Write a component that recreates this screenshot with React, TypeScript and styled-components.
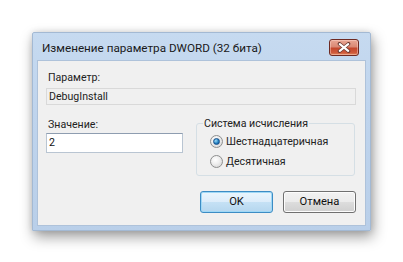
import React from "react";
import styled, { createGlobalStyle } from "styled-components";

const Global = createGlobalStyle`
  html, body { margin: 0; padding: 0; background: #ffffff; }
  body { font-family: Roboto, "Noto Sans", sans-serif; }
`;

const Page = styled.div`
  width: 403px;
  height: 262px;
  padding: 32px 0 0 32px;
  box-sizing: border-box;
`;

const Frame = styled.div`
  width: 339px;
  height: 199px;
  box-sizing: border-box;
  background: linear-gradient(#c6daf0, #bfd4ed 40%, #b9cfe9);
  border: 1px solid #a3b9d3;
  border-radius: 2px 2px 0 0;
  box-shadow: 2px 6px 14px rgba(0, 0, 0, 0.38), 0 0 6px rgba(0, 0, 0, 0.12);
  display: flex;
  flex-direction: column;
  padding: 0 4px 4px 4px;
`;

const TitleBar = styled.div`
  height: 27px;
  display: flex;
  align-items: flex-start;
  justify-content: space-between;
  padding: 0 7px 0 5px;
`;

const TitleText = styled.div`
  font-size: 11.7px;
  line-height: 15px;
  color: #1a1a1a;
  padding-top: 8px;
`;

const CloseButton = styled.div`
  margin-top: 6px;
  width: 30px;
  height: 17px;
  box-sizing: border-box;
  border: 1px solid #6e2a22;
  border-radius: 3px;
  background: linear-gradient(#e9a795 0%, #da8874 45%, #c4472d 55%, #cf5b3c 85%, #e08a60 100%);
  box-shadow: inset 0 0 0 1px rgba(255, 220, 210, 0.45);
  display: flex;
  align-items: center;
  justify-content: center;
`;

const Client = styled.div`
  flex: 1;
  background: #f0f0f0;
  border: 1px solid #aec2da;
  display: flex;
  flex-direction: column;
  padding: 9px 9px 0 8px;
`;

const Label = styled.div`
  font-size: 10.6px;
  line-height: 15px;
  color: #222;
  padding-left: 2px;
`;

const ReadOnlyField = styled.div`
  margin-top: 3px;
  height: 17px;
  box-sizing: border-box;
  border: 1px solid #d9d9d9;
  background: #f0f0f0;
  font-size: 10.6px;
  line-height: 15px;
  color: #222;
  padding-left: 2px;
`;

const Middle = styled.div`
  display: flex;
  margin-top: 12px;
  gap: 13px;
`;

const LeftCol = styled.div`
  display: flex;
  flex-direction: column;
  gap: 1px;
`;

const ValueInput = styled.div`
  width: 137px;
  height: 20px;
  box-sizing: border-box;
  border: 1px solid #b9c5d2;
  border-top-color: #8e9db0;
  background: #ffffff;
  font-size: 10.6px;
  line-height: 18px;
  color: #111;
  padding-left: 2px;
`;

const Group = styled.fieldset`
  margin: 0;
  width: 159px;
  height: 59px;
  box-sizing: border-box;
  border: 1px solid #d5dfe5;
  border-radius: 3px;
  padding: 0 0 0 13px;
  display: flex;
  flex-direction: column;
  gap: 5px;
`;

const Legend = styled.legend`
  font-size: 10.6px;
  line-height: 13px;
  color: #222;
  padding: 0 1px;
  margin-left: -7px;
`;

const RadioRow = styled.div`
  display: flex;
  align-items: center;
  gap: 3px;
  font-size: 10.6px;
  line-height: 15px;
  color: #222;
  &:first-of-type { margin-top: 4px; }
`;

const RadioCircle = styled.div<{ $checked?: boolean }>`
  width: 13px;
  height: 13px;
  box-sizing: border-box;
  border-radius: 50%;
  border: 1px solid #8e8f8f;
  background: radial-gradient(circle at 40% 35%, #ffffff 0%, #f0f0f0 40%, #cfcfcf 100%);
  display: flex;
  align-items: center;
  justify-content: center;
  &::after {
    content: "";
    display: ${(p) => (p.$checked ? "block" : "none")};
    width: 5px;
    height: 5px;
    border-radius: 50%;
    background: radial-gradient(circle at 35% 35%, #9cdcf9, #1d7bbd 60%, #0b4b8a);
    border: 1px solid #18508a;
  }
`;

const Buttons = styled.div`
  display: flex;
  justify-content: flex-end;
  gap: 10px;
  margin-top: 15px;
`;

const Button = styled.div<{ $default?: boolean }>`
  width: 73px;
  height: 22px;
  box-sizing: border-box;
  border-radius: 3px;
  border: 1px solid ${(p) => (p.$default ? "#3c8cc4" : "#707070")};
  background: ${(p) =>
    p.$default
      ? "linear-gradient(#eaf6fd 0%, #dcecfa 50%, #c5e1f5 51%, #b5d6ee 100%)"
      : "linear-gradient(#f2f2f2 0%, #ebebeb 50%, #dddddd 51%, #cfcfcf 100%)"};
  box-shadow: inset 0 0 0 1px ${(p) => (p.$default ? "#9fd8f6" : "#fcfcfc")};
  font-size: 11.2px;
  line-height: 20px;
  text-align: center;
  color: #111;
`;

export default function App() {
  return (
    <Page>
      <Global />
      <Frame>
        <TitleBar>
          <TitleText>Изменение параметра DWORD (32 бита)</TitleText>
          <CloseButton>
            <svg width="14" height="11" viewBox="0 0 14 11">
              <path
                d="M2.5 1.8 L11.5 9.2 M11.5 1.8 L2.5 9.2"
                stroke="#6a3a33"
                strokeWidth="3.6"
                strokeLinecap="round"
                fill="none"
              />
              <path
                d="M2.8 2.2 L11.2 8.8 M11.2 2.2 L2.8 8.8"
                stroke="#ffffff"
                strokeWidth="2.2"
                strokeLinecap="round"
                fill="none"
              />
            </svg>
          </CloseButton>
        </TitleBar>
        <Client>
          <Label>Параметр:</Label>
          <ReadOnlyField>DebugInstall</ReadOnlyField>
          <Middle>
            <LeftCol>
              <Label>Значение:</Label>
              <ValueInput>2</ValueInput>
            </LeftCol>
            <Group>
              <Legend>Система исчисления</Legend>
              <RadioRow>
                <RadioCircle $checked />
                Шестнадцатеричная
              </RadioRow>
              <RadioRow>
                <RadioCircle />
                Десятичная
              </RadioRow>
            </Group>
          </Middle>
          <Buttons>
            <Button $default>OK</Button>
            <Button>Отмена</Button>
          </Buttons>
        </Client>
      </Frame>
    </Page>
  );
}
